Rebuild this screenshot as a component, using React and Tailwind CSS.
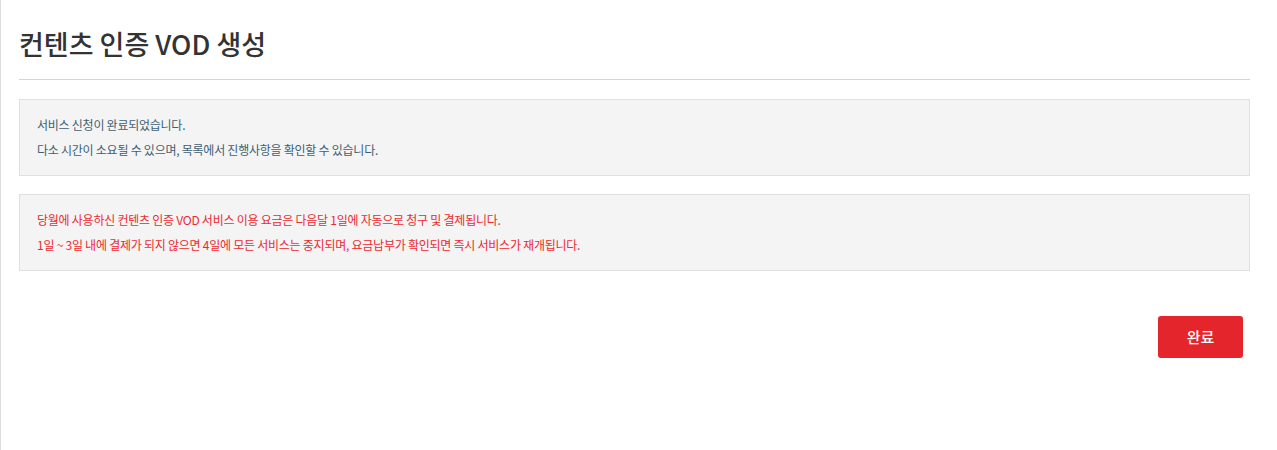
export default function App() {
  return (
    <div className="min-h-[450px] bg-white border-l border-[#dddddd] pl-[18px] pr-[27px] font-['Noto_Sans_CJK_KR','Noto_Sans',sans-serif]">
      <h1 className="pt-[24px] pb-[16px] text-[27px] leading-[39px] font-medium text-[#333333] border-b border-[#d4d4d4]">
        컨텐츠 인증 VOD 생성
      </h1>

      <div className="mt-[19px] bg-[#f4f4f4] border border-[#e0e0e0] px-[17px] pt-[12px] pb-[13px] text-[12px] leading-[25px] tracking-[-0.25px] text-[#3d5f73]">
        <p>서비스 신청이 완료되었습니다.</p>
        <p>다소 시간이 소요될 수 있으며, 목록에서 진행사항을 확인할 수 있습니다.</p>
      </div>

      <div className="mt-[18px] bg-[#f4f4f4] border border-[#e0e0e0] px-[17px] pt-[12px] pb-[13px] text-[12px] leading-[25px] tracking-[-0.25px] text-[#ec2a2f]">
        <p>당월에 사용하신 컨텐츠 인증 VOD 서비스 이용 요금은 다음달 1일에 자동으로 청구 및 결제됩니다.</p>
        <p>1일 ~ 3일 내에 결제가 되지 않으면 4일에 모든 서비스는 중지되며, 요금납부가 확인되면 즉시 서비스가 재개됩니다.</p>
      </div>

      <div className="flex justify-end mt-[45px] pr-[7px]">
        <button className="w-[85px] h-[42px] rounded-[3px] bg-[#e4252b] text-white text-[15px] font-medium">
          완료
        </button>
      </div>
    </div>
  );
}
